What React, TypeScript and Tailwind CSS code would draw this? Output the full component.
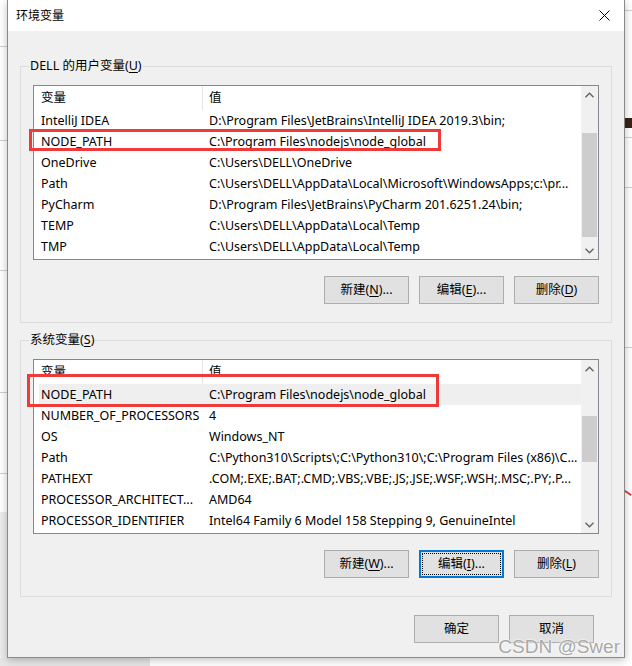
import React from "react";

type Row = [string, string];

const userVars: Row[] = [
    ["IntelliJ IDEA", "D:\\Program Files\\JetBrains\\IntelliJ IDEA 2019.3\\bin;"],
    ["NODE_PATH", "C:\\Program Files\\nodejs\\node_global"],
    ["OneDrive", "C:\\Users\\DELL\\OneDrive"],
    ["Path", "C:\\Users\\DELL\\AppData\\Local\\Microsoft\\WindowsApps;c:\\pr..."],
    ["PyCharm", "D:\\Program Files\\JetBrains\\PyCharm 201.6251.24\\bin;"],
    ["TEMP", "C:\\Users\\DELL\\AppData\\Local\\Temp"],
    ["TMP", "C:\\Users\\DELL\\AppData\\Local\\Temp"],
];

const systemVars: Row[] = [
    ["NODE_PATH", "C:\\Program Files\\nodejs\\node_global"],
    ["NUMBER_OF_PROCESSORS", "4"],
    ["OS", "Windows_NT"],
    ["Path", "C:\\Python310\\Scripts\\;C:\\Python310\\;C:\\Program Files (x86)\\C..."],
    ["PATHEXT", ".COM;.EXE;.BAT;.CMD;.VBS;.VBE;.JS;.JSE;.WSF;.WSH;.MSC;.PY;.P..."],
    ["PROCESSOR_ARCHITECT...", "AMD64"],
    ["PROCESSOR_IDENTIFIER", "Intel64 Family 6 Model 158 Stepping 9, GenuineIntel"],
];

function Chevron({ up }: { up?: boolean }) {
    return (
        <svg width="9" height="6" viewBox="0 0 9 6" className="text-[#606060]">
            <path
                d={up ? "M0.5 5.2L4.5 1.2L8.5 5.2" : "M0.5 0.8L4.5 4.8L8.5 0.8"}
                fill="none"
                stroke="currentColor"
                strokeWidth="1.3"
            />
        </svg>
    );
}

// Windows 10 style vertical scrollbar; the thumb offset is passed as a class.
function Scrollbar({ thumb }: { thumb: string }) {
    return (
        <div className="flex w-[17px] flex-col bg-[#f0f0f0]">
            <div className="flex h-[17px] items-center justify-center">
                <Chevron up />
            </div>
            <div className="flex-1">
                <div className={`mx-px bg-[#cdcdcd] ${thumb}`} />
            </div>
            <div className="flex h-[17px] items-center justify-center">
                <Chevron />
            </div>
        </div>
    );
}

function VarList({
    rows,
    thumb,
    selected,
    children,
}: {
    rows: Row[];
    thumb: string;
    selected?: number;
    children?: React.ReactNode;
}) {
    return (
        <div className="relative flex h-[175px] border border-[#828790] bg-white">
            <div className="min-w-0 flex-1">
                <div className="flex h-[24px]">
                    <div className="flex w-[169px] items-center border-r border-[#e5e5e5] pl-[7px]">变量</div>
                    <div className="flex items-center pl-[6px]">值</div>
                </div>
                {rows.map(([name, value], i) => (
                    <div key={name} className="flex h-[21px]">
                        <div
                            className={`ml-[5px] flex min-w-0 flex-1 items-center pt-px ${
                                i === selected ? "bg-[#efefef]" : ""
                            }`}
                        >
                            <div className="w-[164px] shrink-0 overflow-hidden whitespace-nowrap pl-[2px]">{name}</div>
                            <div className="min-w-0 flex-1 overflow-hidden whitespace-nowrap pl-[6px]">{value}</div>
                        </div>
                    </div>
                ))}
            </div>
            <Scrollbar thumb={thumb} />
            {children}
        </div>
    );
}

function Key({ k }: { k: string }) {
    return <span className="underline decoration-1 underline-offset-2">{k}</span>;
}

function Btn({ children, focused }: { children: React.ReactNode; focused?: boolean }) {
    return (
        <button
            className={`flex h-[28px] w-[85px] items-center justify-center bg-[#e1e1e1] ${
                focused
                    ? "border-2 border-[#0078d7] outline-1 outline-dotted outline-black -outline-offset-4"
                    : "border border-[#adadad]"
            }`}
        >
            {children}
        </button>
    );
}

function Group({ label, children, className }: { label: React.ReactNode; children: React.ReactNode; className: string }) {
    return (
        <fieldset className={`mx-[12px] border border-[#dcdcdc] px-[12px] pt-[11px] pb-[18px] ${className}`}>
            <legend className="-ml-[4px] px-px leading-[16px]">{label}</legend>
            {children}
        </fieldset>
    );
}

// Red annotation frame drawn over a list row.
function Mark({ className }: { className: string }) {
    return <div className={`pointer-events-none absolute border-[3px] border-[#ef3a3a] ${className}`} />;
}

export default function App() {
    return (
        <div className="relative h-[666px] w-[632px] overflow-hidden bg-white font-['Segoe_UI','Noto_Sans','Noto_Sans_CJK_SC',sans-serif] text-[12.5px] text-black">
            {/* desktop behind the dialog */}
            <div className="absolute top-[46px] left-0 h-px w-[8px] bg-[#d0d0d0]" />
            <div className="absolute top-[140px] left-0 h-px w-[8px] bg-[#d0d0d0]" />
            <div className="absolute top-[270px] left-0 h-px w-[8px] bg-[#d0d0d0]" />
            <div className="absolute top-[392px] left-0 h-px w-[8px] bg-[#d0d0d0]" />
            <div className="absolute top-[473px] left-0 h-px w-[8px] bg-[#d0d0d0]" />
            <div className="absolute top-[512px] left-0 h-[154px] w-[8px] bg-[#ececec]" />
            <div className="absolute top-[658px] left-0 h-[8px] w-[150px] bg-[#e6e6e6]" />
            <div className="absolute top-[10px] right-0 h-px w-[8px] bg-[#d0d0d0]" />
            <div className="absolute top-[118px] right-0 h-[10px] w-[8px] bg-[#3b2313]" />
            <div className="absolute top-[137px] right-0 h-px w-[8px] bg-[#d0d0d0]" />
            <div className="absolute top-[187px] right-0 h-px w-[8px] bg-[#d0d0d0]" />
            <div className="absolute top-[347px] right-0 h-px w-[8px] bg-[#d0d0d0]" />
            <div className="absolute top-[492px] right-0 h-[2px] w-[8px] rotate-[35deg] bg-[#e04040]" />

            <div className="absolute top-0 left-[7px] flex h-[658px] w-[618px] flex-col border-x border-b border-[#8a8a8a] bg-[#f0f0f0] shadow-[0_2px_8px_rgba(0,0,0,0.25)]">
                <div className="flex h-[31px] items-center justify-between bg-white pr-[14px] pl-[8px]">
                    <span className="text-[12px]">环境变量</span>
                    <svg width="11" height="11" viewBox="0 0 11 11">
                        <path d="M0.5 0.5L10.5 10.5M10.5 0.5L0.5 10.5" stroke="#000" strokeWidth="1" />
                    </svg>
                </div>

                <Group className="mt-[27px]" label={<>DELL 的用户变量(<Key k="U" />)</>}>
                    <VarList rows={userVars} thumb="mt-[30px] h-[104px]">
                        <Mark className="top-[43px] -left-[5px] h-[22px] w-[412px]" />
                    </VarList>
                    <div className="mt-[16px] flex justify-end gap-[10px]">
                        <Btn>新建(<Key k="N" />)...</Btn>
                        <Btn>编辑(<Key k="E" />)...</Btn>
                        <Btn>删除(<Key k="D" />)</Btn>
                    </div>
                </Group>

                <Group className="mt-[9px]" label={<>系统变量(<Key k="S" />)</>}>
                    <VarList rows={systemVars} thumb="mt-[39px] h-[46px]" selected={0}>
                        <Mark className="top-[14px] -left-[7px] h-[33px] w-[412px]" />
                    </VarList>
                    <div className="mt-[16px] flex justify-end gap-[10px]">
                        <Btn>新建(<Key k="W" />)...</Btn>
                        <Btn focused>编辑(<Key k="I" />)...</Btn>
                        <Btn>删除(<Key k="L" />)</Btn>
                    </div>
                </Group>

                <div className="mt-[18px] flex justify-end gap-[10px] pr-[30px]">
                    <Btn>确定</Btn>
                    <Btn>取消</Btn>
                </div>
            </div>

            {/* watermark */}
            <div className="absolute right-[12px] bottom-[5px] font-['Liberation_Sans',sans-serif] text-[19px] text-[#a8a8a8] [text-shadow:0_0_2px_#fff,0_0_2px_#fff]">
                CSDN @Swer
            </div>
        </div>
    );
}
